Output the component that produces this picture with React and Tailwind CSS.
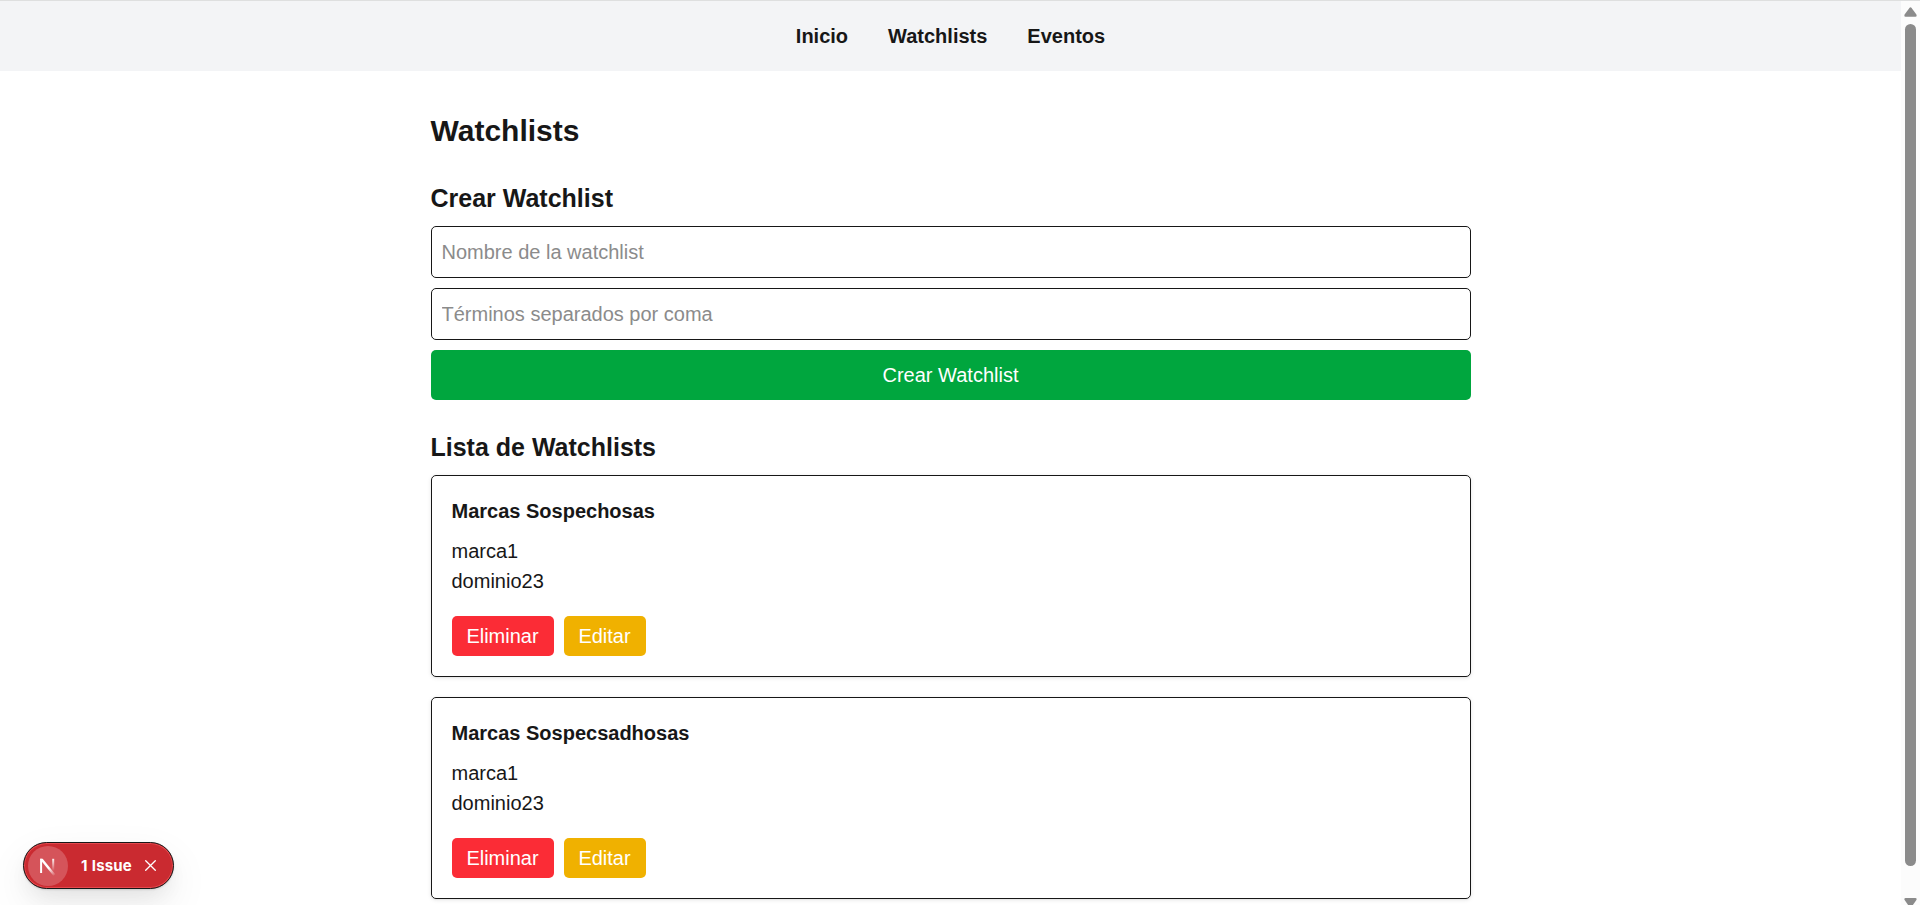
const watchlists = [
  { name: 'Marcas Sospechosas', terms: ['marca1', 'dominio23'] },
  { name: 'Marcas Sospecsadhosas', terms: ['marca1', 'dominio23'] },
];

function NavBar() {
  return (
    <nav className="flex h-[70px] items-center justify-center gap-10 bg-gray-100 font-bold">
      <a href="#inicio">Inicio</a>
      <a href="#watchlists">Watchlists</a>
      <a href="#eventos">Eventos</a>
    </nav>
  );
}

function WatchlistCard({ name, terms }) {
  return (
    <li className="rounded-[5px] border border-[#171717] p-5 shadow-[0_1px_4px_rgba(0,0,0,0.1),0_1px_2px_-1px_rgba(0,0,0,0.1)]">
      <h3 className="mb-2.5 font-bold">{name}</h3>
      <ul>
        {terms.map((term) => (
          <li key={term}>{term}</li>
        ))}
      </ul>
      <div className="mt-5 flex gap-2.5">
        <button className="h-10 w-[102px] rounded-[5px] bg-[#fb2c36] text-white">Eliminar</button>
        <button className="h-10 w-[82px] rounded-[5px] bg-[#f0b100] text-white">Editar</button>
      </div>
    </li>
  );
}

function ScrollBar() {
  return (
    <div className="flex w-[19px] shrink-0 flex-col items-center bg-[#fcfcfc] pt-[6px]">
      <svg className="h-[10px] w-[13px] shrink-0" viewBox="0 0 13 10" fill="#8b8b8b">
        <path d="M5.4 .9Q6.5-.3 7.6 .9L12.4 7.6Q13.2 9.7 11.4 9.7H1.6Q-.2 9.7 .6 7.6Z" />
      </svg>
      <div className="mt-[7px] h-[842px] w-[11px] shrink-0 rounded-full bg-[#8b8b8b]" />
      <svg className="mt-8 h-[10px] w-[13px] shrink-0" viewBox="0 0 13 10" fill="#8b8b8b">
        <path d="M5.4 8.8Q6.5 10 7.6 8.8L12.4 2.1Q13.2 0 11.4 0H1.6Q-.2 0 .6 2.1Z" />
      </svg>
    </div>
  );
}

function IssueBadge() {
  return (
    <div className="absolute top-[841px] left-[23px] flex h-[47px] w-[151px] items-center rounded-full border border-[#171717] bg-[#ca2a30] pl-1 font-['Inter',sans-serif] text-white shadow-[inset_0_0_0_1px_#e5484d,0_1px_2px_rgba(0,0,0,0.12),0_10px_20px_-4px_rgba(0,0,0,0.06),0_16px_40px_0_rgba(0,0,0,0.08)]">
      <span className="flex size-10 shrink-0 items-center justify-center rounded-full bg-[#d5545a]">
        <svg className="size-10" viewBox="0 0 40 40" fill="none">
          <defs>
            <linearGradient id="stem" x1="25" y1="12" x2="25" y2="25" gradientUnits="userSpaceOnUse">
              <stop stopColor="#fff" />
              <stop offset="1" stopColor="#fff" stopOpacity="0" />
            </linearGradient>
            <linearGradient id="diagonal" x1="21" y1="22" x2="26.5" y2="29" gradientUnits="userSpaceOnUse">
              <stop stopColor="#fff" />
              <stop offset="1" stopColor="#fff" stopOpacity="0.1" />
            </linearGradient>
          </defs>
          <path d="M13.1 27V12.8" stroke="#fff" strokeWidth="2" />
          <path d="M12.1 12.8H14.7L27.3 28.3L25.4 29.7L13.2 14.8Z" fill="url(#diagonal)" />
          <path d="M25.2 12.8V25" stroke="url(#stem)" strokeWidth="2" />
        </svg>
      </span>
      <span className="ml-[13px] w-[52px] text-[15px] leading-6 font-bold tracking-[0.15px] [word-spacing:0.5px] whitespace-nowrap">1 Issue</span>
      <svg className="ml-3 size-[11px] shrink-0" viewBox="0 0 11 11" stroke="#fff" strokeWidth="1.3" strokeLinecap="round">
        <path d="M.7 .7 10.3 10.3M10.3 .7 .7 10.3" />
      </svg>
    </div>
  );
}

export default function App() {
  return (
    <div className="relative h-[905px] w-full overflow-hidden border-t border-[#dedfdf] bg-white font-['Liberation_Sans',Arial,sans-serif] text-[20px] leading-[30px] text-[#171717]">
      <div className="flex h-[904px]">
        <div className="min-w-0 flex-1">
          <NavBar />
          <main className="mx-auto w-[1120px] p-10">
            <h1 className="mb-[30px] text-[30px] leading-10 font-bold">Watchlists</h1>
            <section className="mb-[30px]">
              <h2 className="mb-2.5 text-[25px] leading-[35px] font-bold">Crear Watchlist</h2>
              <form className="flex flex-col gap-2.5">
                <input className="h-[52px] rounded-[5px] border border-[#171717] px-2.5 placeholder:text-[#8b8b8b]" placeholder="Nombre de la watchlist" />
                <input className="h-[52px] rounded-[5px] border border-[#171717] px-2.5 placeholder:text-[#8b8b8b]" placeholder="Términos separados por coma" />
                <button type="button" className="h-[50px] rounded-[5px] bg-[#00a63e] text-white">
                  Crear Watchlist
                </button>
              </form>
            </section>
            <section>
              <h2 className="mb-2.5 text-[25px] leading-[35px] font-bold">Lista de Watchlists</h2>
              <ul className="flex flex-col gap-5">
                {watchlists.map((list) => (
                  <WatchlistCard key={list.name} {...list} />
                ))}
              </ul>
            </section>
          </main>
        </div>
        <ScrollBar />
      </div>
      <IssueBadge />
    </div>
  );
}
